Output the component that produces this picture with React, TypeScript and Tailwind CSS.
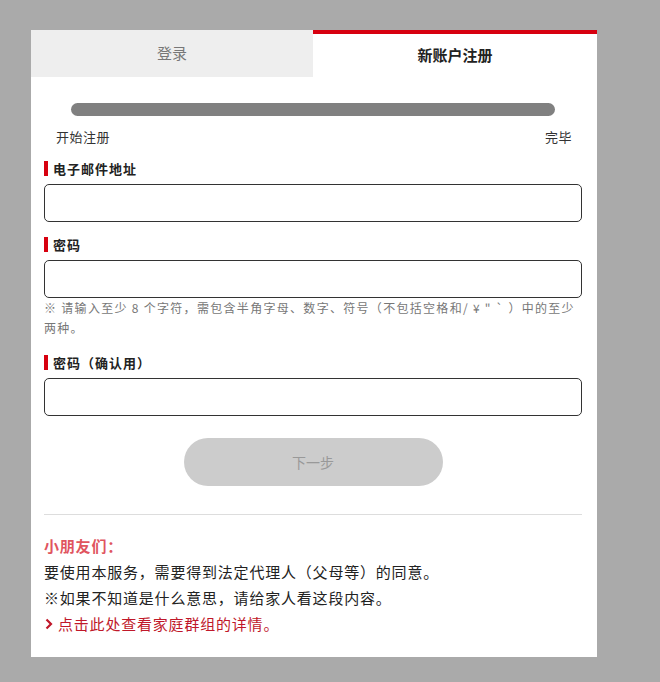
import React from "react";

const font = { fontFamily: '"Noto Sans CJK SC", "Noto Sans", sans-serif' };

function Label({ text }: { text: string }) {
  return (
    <div className="flex items-center h-[15px] mb-[8px]">
      <span className="w-[4px] h-[15px] bg-[#d7000f] mr-[5px]" />
      <span className="text-[13px] font-bold text-[#222] leading-none tracking-[1px]">{text}</span>
    </div>
  );
}

function Input() {
  return <div className="h-[38px] border border-[#333] rounded-[5px] bg-white" />;
}

export default function App() {
  return (
    <div className="w-[660px] h-[682px] bg-[#aaaaaa] pt-[30px] pl-[31px]" style={font}>
      <div className="w-[566px] h-[627px] bg-white flex flex-col">
        <div className="flex h-[47px]">
          <div className="w-[282px] bg-[#eeeeee] flex items-center justify-center text-[15px] text-[#777]">登录</div>
          <div className="flex-1 border-t-[4px] border-[#d7000f] flex items-center justify-center text-[15px] font-bold text-[#222]">新账户注册</div>
        </div>
        <div className="pl-[13px] pr-[15px] flex flex-col">
          <div className="mx-[27px] mt-[26px] h-[13px] rounded-full bg-[#808080]" />
          <div className="flex justify-between pl-[12px] pr-[10px] mt-[12px] text-[13px] text-[#333] leading-[18px] tracking-[0.5px]">
            <span>开始注册</span>
            <span>完毕</span>
          </div>
          <div className="mt-[15px]">
            <Label text="电子邮件地址" />
            <Input />
          </div>
          <div className="mt-[15px]">
            <Label text="密码" />
            <Input />
            <p className="mt-[0px] text-[12px] leading-[20px] text-[#777] tracking-[1.3px]">
              ※ 请输入至少 8 个字符，需包含半角字母、数字、符号（不包括空格和/ ¥ " ` ）中的至少两种。
            </p>
          </div>
          <div className="mt-[17px]">
            <Label text="密码（确认用）" />
            <Input />
          </div>
          <div className="flex justify-center mt-[22px]">
            <button className="w-[259px] h-[48px] rounded-full bg-[#cccccc] text-[14px] text-[#999]">下一步</button>
          </div>
          <div className="mt-[28px] h-px bg-[#dddddd]" />
          <div className="mt-[18px] text-[15px] leading-[26px] tracking-[0.8px]">
            <div className="font-bold text-[#e0555f]">小朋友们：</div>
            <div className="text-[#222]">要使用本服务，需要得到法定代理人（父母等）的同意。</div>
            <div className="text-[#222]">※如果不知道是什么意思，请给家人看这段内容。</div>
            <div className="flex items-center text-[#c0182a]">
              <svg width="10" height="12" viewBox="0 0 10 12" className="mr-[4px]">
                <path d="M2.5 1.5 L7 6 L2.5 10.5" stroke="#c0182a" strokeWidth="2.2" fill="none" />
              </svg>
              <span>点击此处查看家庭群组的详情。</span>
            </div>
          </div>
        </div>
      </div>
    </div>
  );
}
